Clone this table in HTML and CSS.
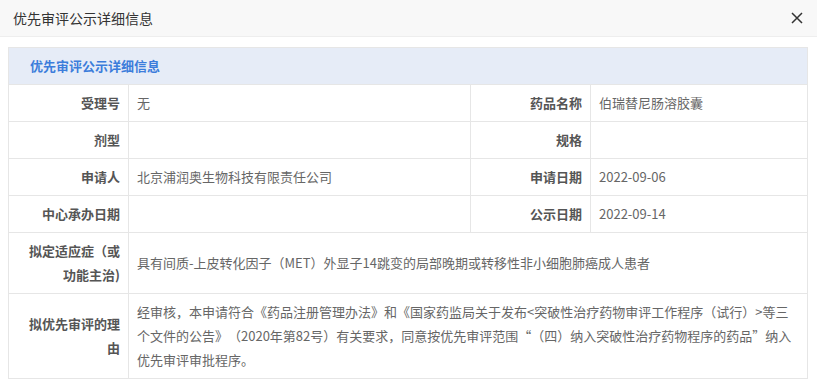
FILE: index.html
```html
<!DOCTYPE html>
<html lang="zh-CN">
<head>
<meta charset="utf-8">
<title>优先审评公示详细信息</title>
<link rel="stylesheet" href="styles.css">
</head>
<body>
<div class="dialog">
  <div class="dialog-header">
    <span class="dialog-title">优先审评公示详细信息</span>
    <button class="close" aria-label="关闭">
      <svg width="12" height="12" viewBox="0 0 12 12"><path d="M1 1L11 11M11 1L1 11" stroke="#333" stroke-width="1.5" fill="none"/></svg>
    </button>
  </div>
  <div class="dialog-body">
    <table class="info">
      <colgroup>
        <col class="c-label"><col class="c-val1"><col class="c-label"><col>
      </colgroup>
      <tr><th class="caption" colspan="4">优先审评公示详细信息</th></tr>
      <tr><td class="lbl">受理号</td><td>无</td><td class="lbl">药品名称</td><td>伯瑞替尼肠溶胶囊</td></tr>
      <tr><td class="lbl">剂型</td><td></td><td class="lbl">规格</td><td></td></tr>
      <tr><td class="lbl">申请人</td><td>北京浦润奥生物科技有限责任公司</td><td class="lbl">申请日期</td><td>2022-09-06</td></tr>
      <tr><td class="lbl">中心承办日期</td><td></td><td class="lbl">公示日期</td><td>2022-09-14</td></tr>
      <tr><td class="lbl">拟定适应症（或功能主治)</td><td colspan="3">具有间质-上皮转化因子（MET）外显子14跳变的局部晚期或转移性非小细胞肺癌成人患者</td></tr>
      <tr><td class="lbl">拟优先审评的理由</td><td colspan="3">经审核，本申请符合《药品注册管理办法》和《国家药监局关于发布&lt;突破性治疗药物审评工作程序（试行）&gt;等三个文件的公告》（2020年第82号）有关要求，同意按优先审评范围“（四）纳入突破性治疗药物程序的药品”纳入优先审评审批程序。</td></tr>
    </table>
  </div>
</div>
</body>
</html>
```
FILE: styles.css
```css
html, body {
  margin: 0;
  padding: 0;
  background: #fff;
}
body {
  font-family: "Microsoft YaHei", "Noto Sans CJK SC", "Noto Sans", sans-serif;
  font-size: 13px;
  color: #666;
  text-spacing-trim: space-all;
}
.dialog-header {
  height: 36px;
  background: #f8f8f8;
  border-bottom: 1px solid #eee;
  display: flex;
  align-items: center;
  justify-content: space-between;
  padding: 0 14px 0 13px;
}
.dialog-title {
  font-size: 14px;
  color: #333;
}
.close {
  border: 0;
  background: none;
  padding: 0;
  width: 12px;
  height: 12px;
  display: flex;
  cursor: pointer;
}
.dialog-body {
  padding: 10px 9px 0 8px;
}
.info {
  width: 800px;
  border-collapse: collapse;
  table-layout: fixed;
}
.c-label { width: 120px; }
.c-val1 { width: 342px; }
.info td, .info th {
  border: 1px solid #e6e6e6;
  padding: 6px 8px;
  line-height: 24px;
  vertical-align: middle;
  text-align: left;
  word-break: break-all;
}
.info th.caption {
  background: #e6ecf7;
  color: #3c7ddb;
  font-weight: bold;
  padding-left: 21px;
}
.info td.lbl {
  text-align: right;
  font-weight: bold;
  color: #555;
  padding-left: 12px;
}
```
